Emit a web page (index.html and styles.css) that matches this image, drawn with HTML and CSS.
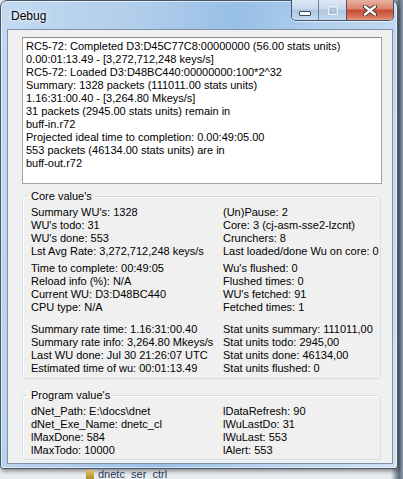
FILE: index.html
```html
<!DOCTYPE html>
<html lang="en">
<head>
    <meta charset="UTF-8">
    <meta name="viewport" content="width=device-width, initial-scale=1.0">
    <title>Debug</title>
    <link rel="stylesheet" href="styles.css">
</head>
<body>
    <div class="window">
        <div class="titlebar">
            <span class="title">Debug</span>
            <div class="caption-buttons">
                <div class="cbtn min">
                    <svg width="12" height="5" viewBox="0 0 12 5"><rect x="0.5" y="0.5" width="11" height="4" rx="0.5" fill="#fff" stroke="#3d4a5a"/></svg>
                </div>
                <div class="cbtn max">
                    <svg width="10" height="9" viewBox="0 0 10 9"><rect x="0.5" y="0.5" width="9" height="8" fill="none" stroke="#e9eff6"/><rect x="2.5" y="2.5" width="5" height="4" fill="none" stroke="#a9b8c9"/></svg>
                </div>
                <div class="cbtn close">
                    <svg width="14" height="11" viewBox="0 0 14 11">
                        <path d="M2 1.5 L12 9.5 M12 1.5 L2 9.5" stroke="#47302c" stroke-width="4.2" stroke-linecap="round"/>
                        <path d="M2 1.5 L12 9.5 M12 1.5 L2 9.5" stroke="#ffffff" stroke-width="2.4" stroke-linecap="round"/>
                    </svg>
                </div>
            </div>
        </div>

        <div class="client">
            <!-- log output box -->
            <div class="log">
                <div>RC5-72: Completed D3:D45C77C8:00000000 (56.00 stats units)</div>
                <div>0.00:01:13.49 - [3,272,712,248 keys/s]</div>
                <div>RC5-72: Loaded D3:D48BC440:00000000:100*2^32</div>
                <div>Summary: 1328 packets (111011.00 stats units)</div>
                <div>1.16:31:00.40 - [3,264.80 Mkeys/s]</div>
                <div>31 packets (2945.00 stats units) remain in</div>
                <div>buff-in.r72</div>
                <div>Projected ideal time to completion: 0.00:49:05.00</div>
                <div>553 packets (46134.00 stats units) are in</div>
                <div>buff-out.r72</div>
            </div>

            <fieldset class="group core">
                <legend>Core value's</legend>
                <div class="block">
                    <div>Summary WU's: 1328</div><div>(Un)Pause: 2</div>
                    <div>WU's todo: 31</div><div>Core: 3 (cj-asm-sse2-lzcnt)</div>
                    <div>WU's done: 553</div><div>Crunchers: 8</div>
                    <div>Lst Avg Rate: 3,272,712,248 keys/s</div><div>Last loaded/done Wu on core: 0</div>
                </div>
                <div class="block second">
                    <div>Time to complete: 00:49:05</div><div>Wu's flushed: 0</div>
                    <div>Reload info (%): N/A</div><div>Flushed times: 0</div>
                    <div>Current WU: D3:D48BC440</div><div>WU's fetched: 91</div>
                    <div>CPU type: N/A</div><div>Fetched times: 1</div>
                </div>
                <div class="block third">
                    <div>Summary rate time: 1.16:31:00.40</div><div>Stat units summary: 111011,00</div>
                    <div>Summary rate info: 3,264.80 Mkeys/s</div><div>Stat units todo: 2945,00</div>
                    <div>Last WU done: Jul 30 21:26:07 UTC</div><div>Stat units done: 46134,00</div>
                    <div>Estimated time of wu: 00:01:13.49</div><div>Stat units flushed: 0</div>
                </div>
            </fieldset>

            <fieldset class="group program">
                <legend>Program value's</legend>
                <div class="block">
                    <div>dNet_Path: E:\docs\dnet</div><div>lDataRefresh: 90</div>
                    <div>dNet_Exe_Name: dnetc_cl</div><div>lWuLastDo: 31</div>
                    <div>lMaxDone: 584</div><div>lWuLast: 553</div>
                    <div>lMaxTodo: 10000</div><div>lAlert: 553</div>
                </div>
            </fieldset>
        </div>
    </div>

    <div class="desktop">
        <span class="folder"></span>
        <span class="file-name">dnetc_ser_ctrl</span>
    </div>
</body>
</html>
```

FILE: styles.css
```css
body {
    margin: 0;
    padding: 0;
    width: 403px;
    height: 479px;
    overflow: hidden;
    font-family: "Liberation Sans", Arial, sans-serif;
    background: linear-gradient(90deg, #e9ecef 0%, #e9ecef 97%, #5f6d7c 99%, #8e9bab 100%);
}
.window {
    box-sizing: border-box;
    width: 398px;
    height: 469px;
    border: 1px solid #4a5766;
    border-radius: 7px 7px 3px 3px;
    padding: 0 4px 4px 6px;
    background: linear-gradient(100deg, #c3daf1 0%, #b0cdeb 30%, #98bfe6 50%, #b4d0ed 70%, #d0e2f4 100%);
    box-shadow: inset 0 0 0 1px rgba(255, 255, 255, 0.55), 1px 2px 4px rgba(0, 0, 0, 0.45);
}
.titlebar {
    height: 28px;
    display: flex;
    justify-content: space-between;
    align-items: flex-start;
}
.title {
    padding: 8px 0 0 4px;
    font-size: 12px;
    line-height: 14px;
    color: #000;
    text-shadow: 0 0 6px #fff, 0 0 3px #fff;
}
.caption-buttons {
    display: flex;
    margin-top: -1px;
    margin-right: -1px;
    border: 1px solid #44546a;
    border-top: none;
    border-radius: 0 0 5px 5px;
    overflow: hidden;
    box-shadow: 0 1px 0 rgba(255, 255, 255, 0.6);
}
.cbtn {
    height: 20px;
    display: flex;
    justify-content: center;
    align-items: center;
}
.cbtn.min {
    width: 26px;
    align-items: flex-end;
    padding-bottom: 4px;
    box-sizing: border-box;
    background: linear-gradient(#dde8f4, #c6d8eb 45%, #afc6e0 50%, #c4d9ee);
}
.cbtn.max {
    width: 27px;
    border-left: 1px solid #6e7f94;
    background: linear-gradient(#dde8f4, #c6d8eb 45%, #afc6e0 50%, #c4d9ee);
}
.cbtn.close {
    width: 46px;
    border-left: 1px solid #6e4a48;
    background: linear-gradient(#eab1a4, #d9826e 45%, #c84a33 50%, #d8735a 85%, #e49a80);
}
.client {
    box-sizing: border-box;
    height: 435px;
    padding: 7px 10px 0 14px;
    background-color: #f0f0f0;
    border: 1px solid #7d93ab;
    font-size: 11px;
    line-height: 13px;
    color: #000;
}
.log {
    box-sizing: border-box;
    width: 360px;
    height: 147px;
    padding: 2px 3px;
    background-color: #fff;
    border: 1px solid #a3a3a3;
    border-top-color: #8a8a8a;
    white-space: nowrap;
    overflow: hidden;
}
.group {
    box-sizing: border-box;
    width: 359px;
    margin: 6px 0 0 0;
    padding: 3px 0 3px 8px;
    border: 1px solid #d5dfe5;
    border-radius: 3px;
    box-shadow: inset 1px 1px 0 #fff;
    min-width: 0;
}
.group legend {
    margin-left: -3px;
    padding: 0 2px 0 3px;
    line-height: 13px;
}
.group.program {
    margin-top: 10px;
    padding-bottom: 2px;
}
.block {
    display: grid;
    grid-template-columns: 192px 1fr;
    white-space: nowrap;
}
.block.second {
    margin-top: 4px;
}
.block.third {
    margin-top: 9px;
}
.desktop {
    height: 10px;
    display: flex;
    align-items: flex-start;
    gap: 4px;
    padding-left: 86px;
    overflow: hidden;
    font-size: 11px;
    color: #1e395b;
}
.folder {
    width: 8px;
    height: 9px;
    margin-top: 1px;
    background: linear-gradient(#e4c66b, #b18c2a);
}
.file-name {
    line-height: 10px;
}
```
